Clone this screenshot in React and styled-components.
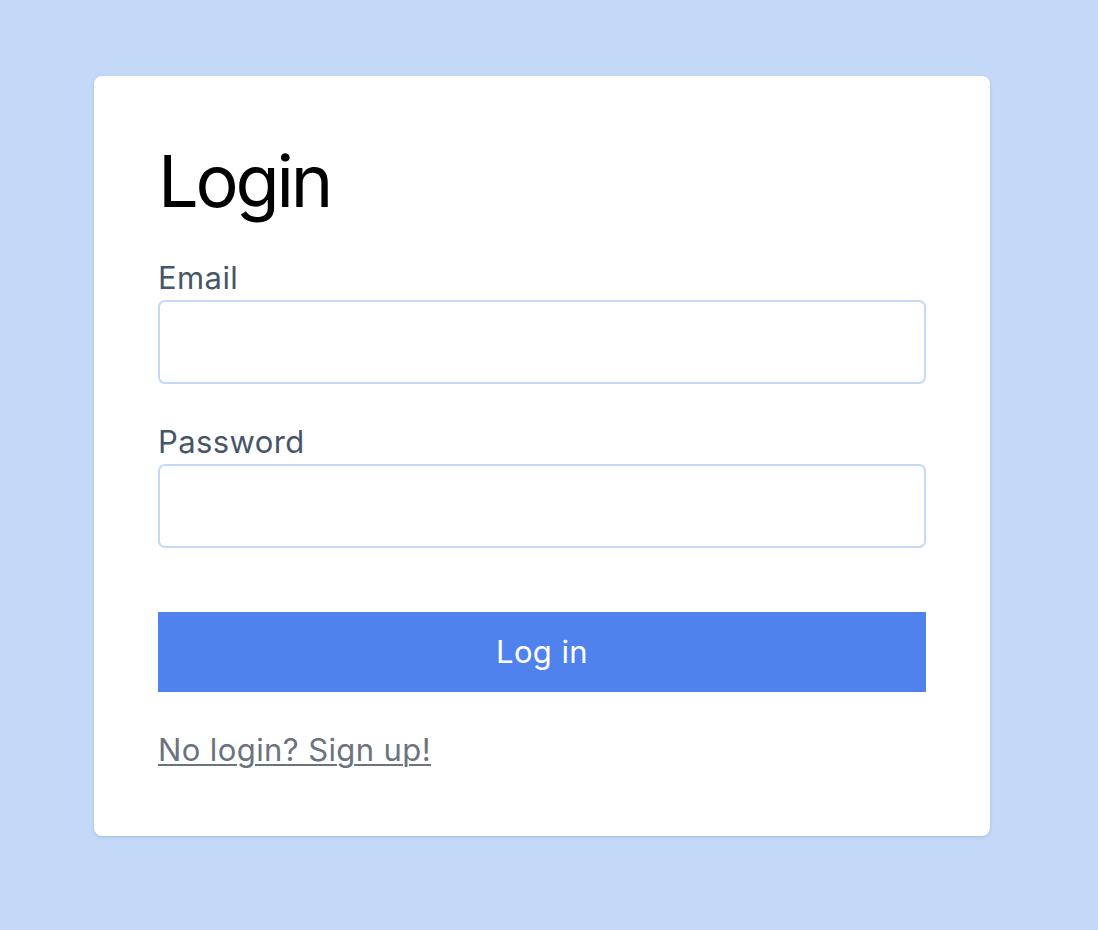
import React from 'react';
import styled, { createGlobalStyle } from 'styled-components';

const GlobalStyle = createGlobalStyle`
  html, body {
    margin: 0;
    padding: 0;
    background: #c4d9f8;
    font-family: Inter, "Noto Sans", sans-serif;
  }
`;

const Page = styled.div`
  min-height: 930px;
  padding: 76px 0 0 94px;
  box-sizing: border-box;
`;

const Card = styled.div`
  width: 896px;
  box-sizing: border-box;
  padding: 64px;
  background: #fff;
  border-radius: 8px;
  box-shadow: 0 1px 3px rgba(60, 90, 140, 0.25);
`;

const Title = styled.h1`
  margin: 0 0 32px;
  font-size: 72px;
  line-height: 1.15;
  font-weight: 400;
  letter-spacing: -3.2px;
  color: #000;
`;

const Field = styled.div`
  display: flex;
  flex-direction: column;
  margin-bottom: ${(p) => (p.last ? '64px' : '35px')};
`;

const Label = styled.label`
  font-size: 31px;
  line-height: 45px;
  letter-spacing: 0.4px;
  color: #475569;
`;

const Input = styled.input`
  height: 84px;
  box-sizing: border-box;
  border: 2px solid #c4d9f8;
  border-radius: 7px;
  padding: 0 16px;
  font-size: 30px;
  font-family: inherit;
  outline: none;
`;

const Button = styled.button`
  display: block;
  width: 100%;
  height: 80px;
  border: none;
  background: #4f82ec;
  color: #fff;
  font-family: inherit;
  font-size: 31px;
  letter-spacing: 0.4px;
  cursor: pointer;
  margin-bottom: 35px;
`;

const SignUp = styled.a`
  display: inline-block;
  font-size: 31px;
  line-height: 45px;
  letter-spacing: 0.4px;
  color: #6b7280;
  text-decoration: underline;
  text-decoration-thickness: 2px;
  text-underline-offset: 3px;
`;

export default function App() {
  return (
    <>
      <GlobalStyle />
      <Page>
        <Card>
          <Title>Login</Title>
          <Field>
            <Label htmlFor="email">Email</Label>
            <Input id="email" type="email" />
          </Field>
          <Field last>
            <Label htmlFor="password">Password</Label>
            <Input id="password" type="password" />
          </Field>
          <Button>Log in</Button>
          <SignUp href="#">No login? Sign up!</SignUp>
        </Card>
      </Page>
    </>
  );
}
